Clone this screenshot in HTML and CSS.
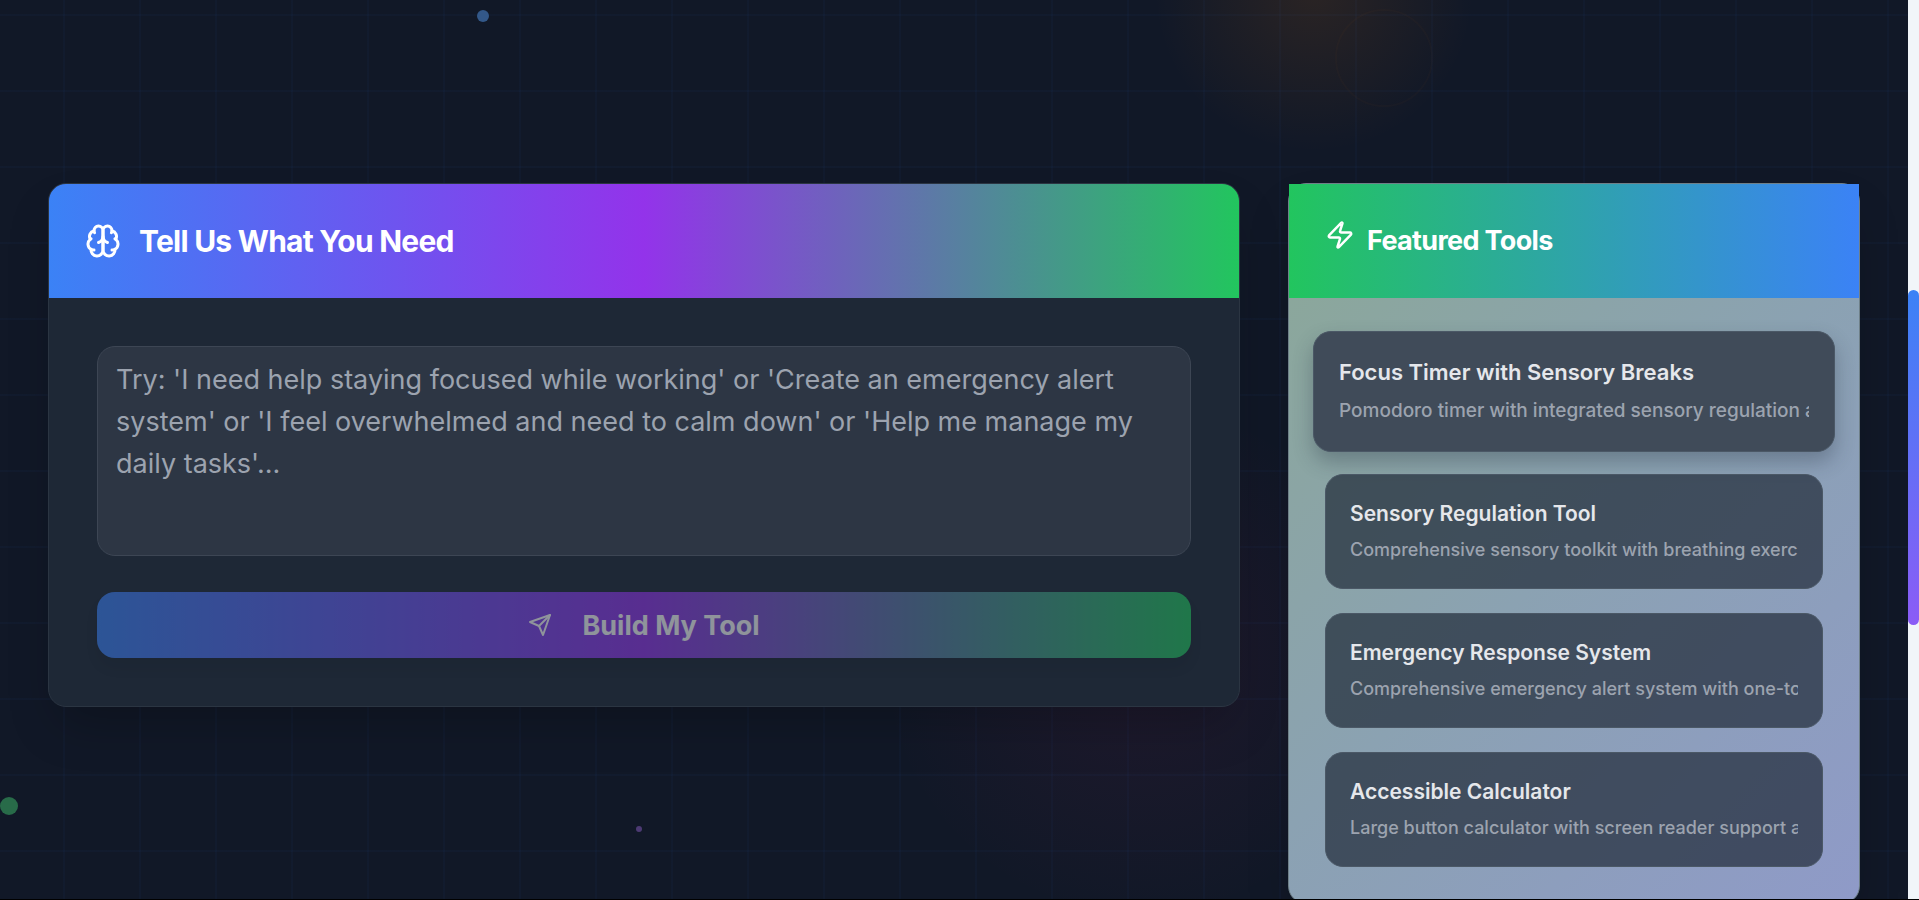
FILE: index.html
```html
<!DOCTYPE html>
<html lang="en">
<head>
<meta charset="utf-8">
<title>Tool Builder</title>
<link rel="stylesheet" href="styles.css">
</head>
<body>
<div class="page">
  <div class="backdrop" aria-hidden="true">
    <span class="glow glow-amber"></span>
    <span class="glow glow-rose"></span>
    <span class="ring"></span>
    <span class="dot dot-blue"></span>
    <span class="dot dot-green"></span>
    <span class="dot dot-purple"></span>
  </div>
  <main class="layout">
    <section class="card builder">
      <header class="card-header builder-header">
        <svg class="icon-brain" viewBox="0 0 24 24" aria-hidden="true"><path d="M12 5a3 3 0 1 0-5.997.125 4 4 0 0 0-2.526 5.77 4 4 0 0 0 .556 6.588A4 4 0 1 0 12 18Z"/><path d="M12 5a3 3 0 1 1 5.997.125 4 4 0 0 1 2.526 5.77 4 4 0 0 1-.556 6.588A4 4 0 1 1 12 18Z"/><path d="M15 13a4.500 4.500 0 0 1-3-4 4.500 4.500 0 0 1-3 4"/><path d="M17.599 6.500a3 3 0 0 0 .399-1.375"/><path d="M6.003 5.125A3 3 0 0 0 6.401 6.500"/><path d="M3.477 10.896a4 4 0 0 1 .585-.396"/><path d="M19.938 10.500a4 4 0 0 1 .585.396"/><path d="M6 18a4 4 0 0 1-1.967-.516"/><path d="M19.967 17.484A4 4 0 0 1 18 18"/></svg>
        <h2 class="builder-title"><label for="need">Tell Us What You Need</label></h2>
      </header>
      <form class="builder-body">
        <textarea id="need" class="need" placeholder="Try: 'I need help staying focused while working' or 'Create an emergency alert system' or 'I feel overwhelmed and need to calm down' or 'Help me manage my daily tasks'..."></textarea>
        <button class="build" type="submit" disabled>
          <svg class="icon-send" viewBox="0 0 24 24" aria-hidden="true"><path d="m22 2-7 20-4-9-9-4Z"/><path d="M22 2 11 13"/></svg>
          <span>Build My Tool</span>
        </button>
      </form>
    </section>
    <aside class="card featured">
      <header class="card-header featured-header">
        <h3 class="featured-title">
          <svg class="icon-zap" viewBox="0 0 24 24" aria-hidden="true"><path d="M4 14a1 1 0 0 1-.78-1.630l9.900-10.200a.5.5 0 0 1 .86.460l-1.920 6.020A1 1 0 0 0 13 10h7a1 1 0 0 1 .78 1.630l-9.900 10.200a.5.5 0 0 1-.86-.46l1.920-6.020A1 1 0 0 0 11 14z"/></svg>
          <span>Featured Tools</span>
        </h3>
      </header>
      <div class="tools">
        <button class="tool tool-raised" type="button">
          <span class="tool-name">Focus Timer with Sensory Breaks</span>
          <span class="tool-text">Pomodoro timer with integrated sensory regulation and</span>
        </button>
        <button class="tool" type="button">
          <span class="tool-name">Sensory Regulation Tool</span>
          <span class="tool-text">Comprehensive sensory toolkit with breathing exercises</span>
        </button>
        <button class="tool" type="button">
          <span class="tool-name">Emergency Response System</span>
          <span class="tool-text">Comprehensive emergency alert system with one-touch</span>
        </button>
        <button class="tool" type="button">
          <span class="tool-name">Accessible Calculator</span>
          <span class="tool-text">Large button calculator with screen reader support and</span>
        </button>
      </div>
    </aside>
  </main>
</div>
<div class="rail" aria-hidden="true"><span class="thumb"></span></div>
</body>
</html>
```

FILE: styles.css
```css
* { box-sizing: border-box; }

body {
  margin: 0;
  height: 100vh;
  display: flex;
  overflow: hidden;
  background: #111827;
  border-bottom: 1px solid #000;
  font-family: Inter, "Liberation Sans", sans-serif;
  color: #fff;
}

h2, h3 { margin: 0; }
button, textarea { font-family: inherit; margin: 0; }

svg {
  flex: none;
  fill: none;
  stroke: currentColor;
  stroke-width: 2;
  stroke-linecap: round;
  stroke-linejoin: round;
}

.page {
  position: relative;
  flex: 1;
  min-width: 0;
  overflow: hidden;
}

.backdrop {
  position: absolute;
  inset: 0;
  background-image:
    linear-gradient(to right, rgba(59, 130, 246, 0.03) 2px, transparent 2px),
    linear-gradient(to bottom, rgba(59, 130, 246, 0.03) 2px, transparent 2px);
  background-size: 76px 76px;
  background-position: 63px 14px;
}

.glow, .ring, .dot { position: absolute; border-radius: 50%; }

.glow-amber {
  left: 1114px;
  top: -208px;
  width: 400px;
  height: 400px;
  background: radial-gradient(closest-side, rgba(245, 130, 11, 0.11), transparent 80%);
}

.glow-rose {
  left: 880px;
  top: 400px;
  width: 520px;
  height: 520px;
  background: radial-gradient(closest-side, rgba(219, 39, 119, 0.07), transparent);
}

.ring {
  left: 1335px;
  top: 9px;
  width: 98px;
  height: 98px;
  border: 2px solid rgba(245, 130, 11, 0.025);
}

.dot-blue { left: 477px; top: 10px; width: 12px; height: 12px; background: #335889; }
.dot-green { left: 0; top: 797px; width: 18px; height: 18px; background: #286b49; }
.dot-purple { left: 636px; top: 826px; width: 6px; height: 6px; background: #4c3a73; }

.layout {
  position: relative;
  display: grid;
  grid-template-columns: repeat(3, minmax(0, 1fr));
  gap: 48px;
  align-items: start;
  padding: 183px 48px 0;
}

.card {
  border-radius: 18px;
  border: 1px solid #2b3542;
  box-shadow: 0 25px 50px -12px rgba(0, 0, 0, 0.25);
}

.card-header {
  display: flex;
  align-items: center;
  padding: 36px;
}

.builder {
  grid-column: span 2;
  overflow: hidden;
  background: #1e2836;
}

.builder-header {
  gap: 18px;
  background: linear-gradient(to right, #3b82f6, #9333ea 50%, #22c55e);
}

.icon-brain { width: 36px; height: 36px; }

.builder-title {
  font-size: 30px;
  line-height: 42px;
  font-weight: 700;
  letter-spacing: -0.025em;
}

.builder-body {
  display: flex;
  flex-direction: column;
  gap: 36px;
  padding: 48px;
}

.need {
  display: block;
  width: 100%;
  height: 210px;
  padding: 12px 18px;
  resize: none;
  border: 1px solid #3d4654;
  border-radius: 18px;
  background: #2d3644;
  color: #fff;
  font-size: 27px;
  line-height: 42px;
}

.need::placeholder { color: #9ca3af; opacity: 1; }

.build {
  display: flex;
  align-items: center;
  justify-content: center;
  gap: 30px;
  height: 66px;
  border: 0;
  border-radius: 18px;
  background: linear-gradient(to right, #3b82f6, #9333ea 50%, #22c55e);
  color: #fff;
  font-size: 27px;
  font-weight: 700;
  opacity: 0.5;
  box-shadow: 0 10px 15px -3px rgba(0, 0, 0, 0.1);
}

.icon-send { width: 24px; height: 24px; }

.featured {
  border-color: #6f8088;
  background: linear-gradient(135deg, #8ba897, #8ba2b2 50%, #8f9ac8);
}

.featured-header { background: linear-gradient(to right, #22c55e, #3b82f6); }

.featured-title {
  display: flex;
  align-items: baseline;
  gap: 12px;
  font-size: 27px;
  line-height: 42px;
  font-weight: 700;
  letter-spacing: -0.025em;
}

.icon-zap { width: 30px; height: 30px; }

.tools {
  display: flex;
  flex-direction: column;
  gap: 24px;
  padding: 36px;
}

.tool {
  display: flex;
  flex-direction: column;
  gap: 6px;
  padding: 24px;
  border: 1px solid #4b5866;
  border-radius: 18px;
  background: rgba(31, 41, 55, 0.7);
  text-align: left;
}

.tool-name, .tool-text {
  display: block;
  width: 100%;
  overflow: hidden;
  white-space: nowrap;
}

.tool-name {
  color: #e5e7eb;
  font-size: 21px;
  line-height: 30px;
  font-weight: 600;
}

.tool-text {
  color: #9ca3af;
  font-size: 18px;
  line-height: 29px;
  font-weight: 500;
}

.tool-raised {
  margin: -3px -12px -2px;
  padding: 25px;
  gap: 8px;
  background: #404b59;
  box-shadow: 0 10px 20px rgba(31, 41, 55, 0.3);
}

.tool-raised .tool-name { font-size: 22px; }
.tool-raised .tool-text { font-size: 19px; line-height: 31px; }

.rail {
  width: 11px;
  display: flex;
  flex-direction: column;
  padding-top: 290px;
  background: #f1f5f9;
}

.thumb {
  height: 335px;
  border-radius: 6px;
  background: linear-gradient(#3b82f6, #8b5cf6);
}
```
